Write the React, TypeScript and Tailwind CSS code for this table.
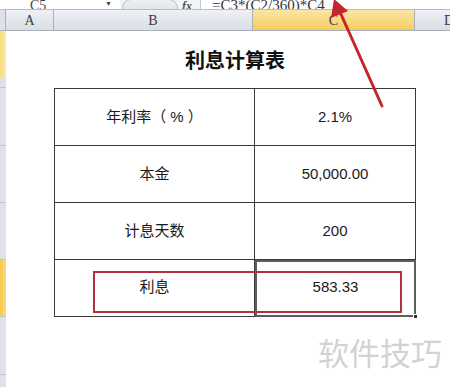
import React from "react";

const rows = [
  { label: "年利率（ % ）", value: "2.1%" },
  { label: "本金", value: "50,000.00" },
  { label: "计息天数", value: "200" },
];

function RowHeads() {
  return (
    <div className="flex w-[6px] flex-col">
      <div className="flex h-[57px] flex-col border-b border-[#c3c8d0]">
        <div className="h-[47px] bg-gradient-to-r from-[#f6dc7c] to-[#fbe9a6]" />
        <div className="flex-1 bg-[#dfe3e8]" />
      </div>
      <div className="h-[58px] border-b border-[#c3c8d0] bg-[#dfe3e8]" />
      <div className="h-[57px] border-b border-[#c3c8d0] bg-[#dfe3e8]" />
      <div className="h-[57px] border-b border-[#c3c8d0] bg-[#dfe3e8]" />
      <div className="h-[57px] border-b border-[#c3c8d0] bg-gradient-to-r from-[#f4c850] to-[#fbdb7a]" />
      <div className="h-[58px] border-b border-[#c3c8d0] bg-[#dfe3e8]" />
      <div className="flex-1 bg-[#dfe3e8]" />
    </div>
  );
}

export default function App() {
  return (
    <div className="relative h-[387px] w-[450px] overflow-hidden bg-white font-['Liberation_Sans','Noto_Sans_CJK_SC',sans-serif] text-[#1a1a1a]">
      {/* formula bar, cut at the top */}
      <div className="flex h-[10px] items-end overflow-hidden border-b border-[#b8bcc4] bg-[#f3f4f6]">
        <div className="flex h-[10px] w-[120px] items-end bg-white">
          <span className="mb-[-4px] ml-[30px] font-['Liberation_Serif',serif] text-[14px] leading-[14px] text-[#444]">C5</span>
          <span className="mb-[2px] ml-auto mr-[8px] text-[7px] leading-[7px] text-[#444]">▼</span>
        </div>
        <div className="mb-[-8px] ml-[2px] h-[18px] w-[56px] rounded-full border border-[#b9bdc6] bg-gradient-to-b from-[#eef0f3] to-[#d9dce2]" />
        <span className="mb-[-3px] ml-[4px] font-['Liberation_Serif',serif] text-[12px] italic font-bold leading-[12px] text-[#555]">fx</span>
        <div className="ml-[8px] flex h-[10px] flex-1 items-end border-l border-[#c7cad1] bg-white">
          <span className="mb-[-4px] ml-[11px] font-['Liberation_Serif',serif] text-[15px] leading-[15px] text-[#333]">=C3*(C2/360)*C4</span>
        </div>
      </div>

      {/* column headers */}
      <div className="flex h-[21px] border-b border-[#a9b0ba] font-['Liberation_Serif',serif] text-[14px] text-[#3c3c3c]">
        <div className="w-[6px] border-r border-[#a9b0ba] bg-[#dfe3e8]" />
        <div className="flex w-[48px] items-center justify-center border-r border-[#a9b0ba] bg-gradient-to-b from-[#eef1f5] to-[#dadee5]">A</div>
        <div className="flex w-[199px] items-center justify-center border-r border-[#a9b0ba] bg-gradient-to-b from-[#eef1f5] to-[#dadee5]">B</div>
        <div className="flex w-[162px] items-center justify-center border-r border-[#a9b0ba] bg-gradient-to-b from-[#fbe6a4] to-[#f6cd5c]">C</div>
        <div className="flex flex-1 items-center justify-end bg-gradient-to-b from-[#eef1f5] to-[#dadee5]">
          <span className="mr-[-4px]">D</span>
        </div>
      </div>

      {/* sheet body */}
      <div className="flex h-[356px]">
        <RowHeads />
        <div className="ml-[48px] flex flex-col">
          <div className="flex h-[57px] w-[362px] items-center justify-center pt-[2px] text-[20px] font-bold text-[#111]">
            利息计算表
          </div>
          <div className="w-[362px] border-l border-t border-[#3a3a3a] text-[15px]">
            {rows.map((r) => (
              <div key={r.label} className="flex h-[57px]">
                <div className="flex w-[200px] items-center justify-center whitespace-pre border-b border-r border-[#3a3a3a]">{r.label}</div>
                <div className="flex flex-1 items-center justify-center border-b border-r border-[#3a3a3a]">{r.value}</div>
              </div>
            ))}
            <div className="flex h-[57px]">
              <div className="flex w-[200px] items-center justify-center border-b border-r border-[#3a3a3a] pb-[2px]">利息</div>
              <div className="relative flex flex-1 items-center justify-center border-2 border-[#5e5e5e] pb-[2px]">
                583.33
                <span className="absolute bottom-[-4px] right-[-4px] h-[5px] w-[5px] border border-white bg-[#333]" />
              </div>
            </div>
          </div>
        </div>
      </div>

      {/* red highlight box */}
      <div className="absolute left-[93px] top-[271px] h-[42px] w-[309px] border-2 border-[#b3313d]" />

      {/* red arrow */}
      <svg className="absolute left-0 top-0" width="450" height="387" viewBox="0 0 450 387">
        <line x1="382" y1="106" x2="340" y2="12" stroke="#c4262e" strokeWidth="3" strokeLinecap="round" />
        <polygon points="334,-1 331,18 348,11" fill="#c4262e" />
      </svg>

      {/* watermark */}
      <div className="absolute left-[318px] top-[334px] font-['Noto_Sans_CJK_SC',sans-serif] text-[31px] leading-[36px] text-[#d2d2d2]">
        软件技巧
      </div>
    </div>
  );
}
